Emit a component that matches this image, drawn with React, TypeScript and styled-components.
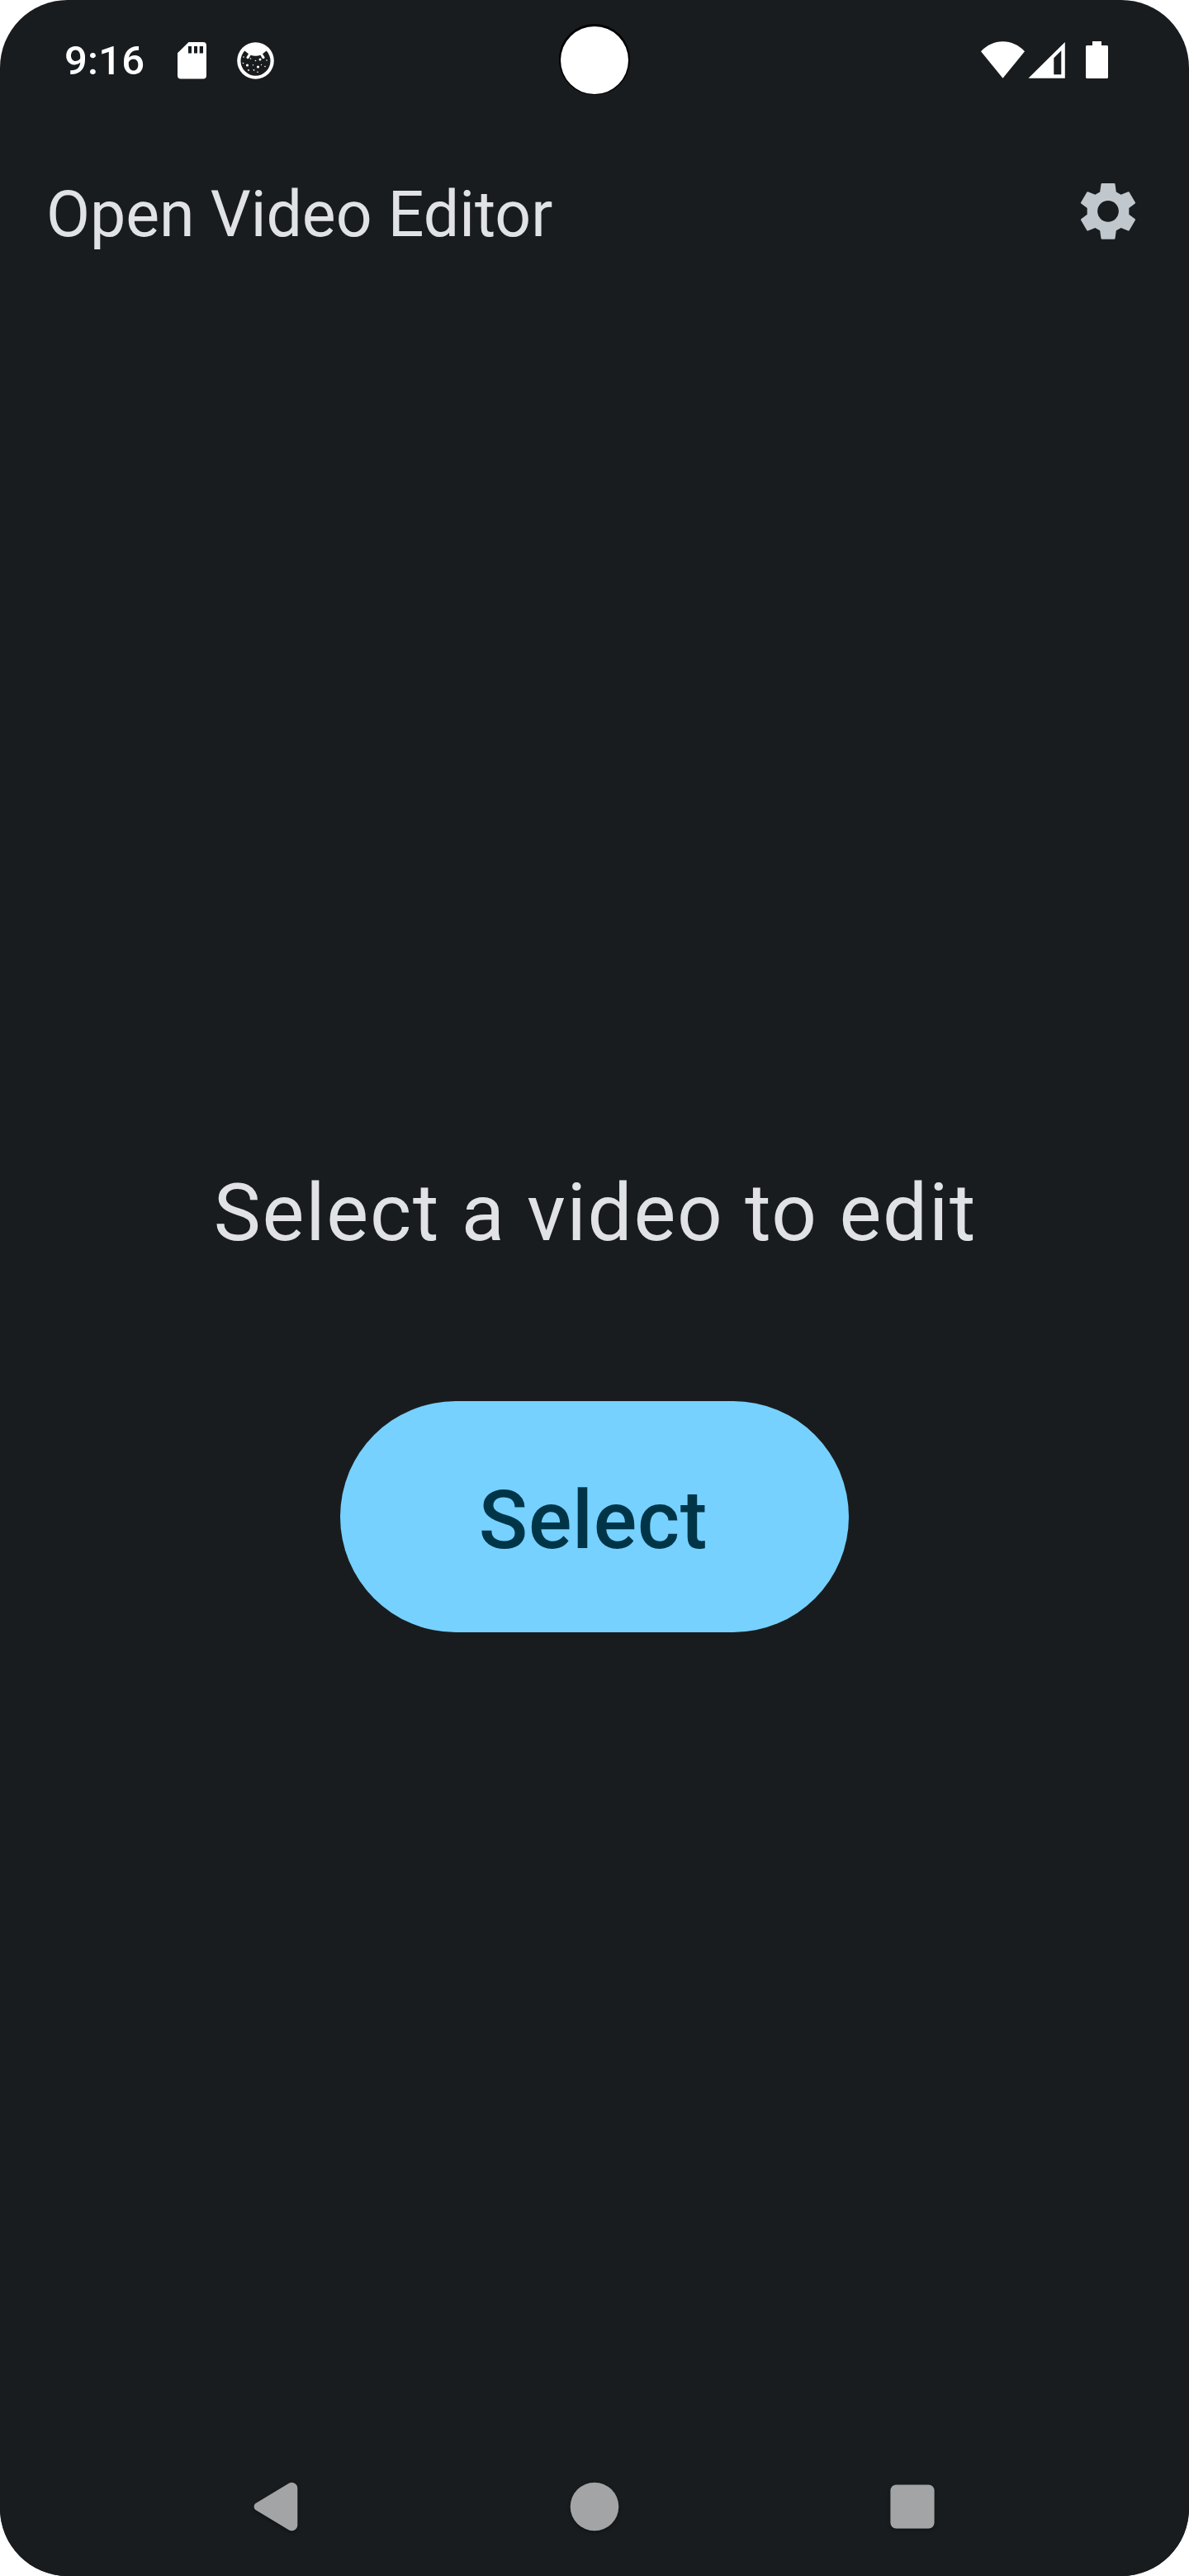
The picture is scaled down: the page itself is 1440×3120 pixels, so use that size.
import React from "react";
import styled, { createGlobalStyle } from "styled-components";

const GlobalStyle = createGlobalStyle`
  body {
    margin: 0;
    background: #ffffff;
  }
  * {
    box-sizing: border-box;
  }
`;

const Screen = styled.div`
  display: flex;
  flex-direction: column;
  width: 1440px;
  height: 3120px;
  overflow: hidden;
  border-radius: 82px;
  background: #191c1e;
  color: #e1e2e5;
  font-family: Roboto, "Liberation Sans", sans-serif;
`;

const StatusBar = styled.header`
  display: grid;
  grid-template-columns: 1fr 86px 1fr;
  align-items: center;
  height: 147px;
  padding: 0 98px 0 78px;
`;

const StatusGroup = styled.div<{ $end?: boolean }>`
  display: flex;
  align-items: center;
  justify-content: ${(p) => (p.$end ? "flex-end" : "flex-start")};
  padding-bottom: ${(p) => (p.$end ? 3 : 0)}px;
`;

const Clock = styled.time`
  width: 137px;
  padding-top: 1px;
  color: #ffffff;
  font-size: 49px;
  font-weight: 500;
  line-height: 58px;
  letter-spacing: 0.2px;
`;

const Glyph = styled.svg<{ $w: number; $h: number; $gap?: number }>`
  display: block;
  flex: none;
  width: ${(p) => p.$w}px;
  height: ${(p) => p.$h}px;
  margin-left: ${(p) => p.$gap ?? 0}px;
`;

const Camera = styled.div`
  width: 86px;
  height: 86px;
  padding: 3px 2px 1px;
  margin: -3px 0 0 10px;
  border-radius: 50%;
  background: #000000;

  &::before {
    content: "";
    display: block;
    width: 82px;
    height: 82px;
    border-radius: 50%;
    background: #ffffff;
  }
`;

const AppBar = styled.div`
  display: flex;
  align-items: center;
  justify-content: space-between;
  height: 224px;
  padding: 0 65px 6px 56px;
`;

const Title = styled.h1`
  margin: 0;
  padding-top: 8px;
  font-size: 77px;
  font-weight: 400;
  line-height: 98px;
`;

const IconButton = styled.button`
  display: flex;
  padding: 0;
  border: 0;
  background: none;
`;

const Main = styled.main`
  display: flex;
  flex: 1;
  flex-direction: column;
  align-items: center;
  padding-top: 1035px;
`;

const Prompt = styled.p`
  margin: 0;
  padding-left: 2px;
  font-size: 96px;
  line-height: 126px;
  letter-spacing: 1.75px;
`;

const SelectButton = styled.button`
  width: 616px;
  height: 280px;
  margin-top: 165px;
  padding: 9px 3px 0 0;
  border: 0;
  border-radius: 140px;
  background: #76d1ff;
  color: #003548;
  font-family: inherit;
  font-size: 98px;
  font-weight: 500;
  line-height: 126px;
  letter-spacing: 0.7px;
`;

const NavBar = styled.nav`
  display: flex;
  align-items: center;
  justify-content: space-between;
  height: 168px;
  padding: 0 302px;
  background: #181c1e;
`;

const NavIcon = styled.svg`
  display: block;
  width: 66px;
  height: 66px;
  fill: #a3a4a5;
  filter: drop-shadow(0 2px 2px rgba(0, 0, 0, 0.3));
`;

const SdCard = () => (
  <Glyph $w={35} $h={45} viewBox="0 0 35 45" fill="#fff">
    <path
      fillRule="evenodd"
      d="M13.500 0H31a4 4 0 0 1 4 4v36.500a4 4 0 0 1-4 4H4a4 4 0 0 1-4-4V13.300zM13 5v8.500h4V5zm7 0v8.500h4V5zm6.700 0v8.500H31V5z"
    />
  </Glyph>
);

const SPECKS: [number, number, number][] = [
  [8, 18, 0.8], [16.5, 20, 0.8], [22.5, 22.5, 0.8], [28, 21, 1.5], [36, 22, 0.8],
  [7.5, 25.5, 0.8], [12.5, 28, 1.6], [19.5, 27.7, 0.7], [25.5, 30, 1.6],
  [29.5, 27.5, 0.7], [34, 29.5, 0.8], [14, 34, 0.9], [20.5, 33.8, 0.9], [25, 36.3, 0.8],
];

const CatBadge = () => (
  <Glyph $w={45} $h={45} $gap={37} viewBox="0 0 45 45">
    <circle cx="22.5" cy="22.5" r="22.3" fill="#fff" />
    <path
      fill="#191c1e"
      d="M9.300 10.500L14 14.300L11.300 18.500Q12.300 21.500 14.500 19.500L16.500 15.800Q22.500 17.700 28.500 15.800L30.500 19.500Q33 21.500 33.700 18.500L31 14.300L35.700 10.500A18 18 0 1 1 9.300 10.500Z"
    />
    {SPECKS.map(([x, y, r]) => (
      <circle key={`${x}-${y}`} cx={x} cy={y} r={r} fill="#fff" />
    ))}
  </Glyph>
);

const Wifi = () => (
  <Glyph $w={53} $h={45} viewBox="0 0 53 45" fill="#fff">
    <path d="M0 12.300C7 4.500 16.500 0.200 26.500 0.200S46 4.500 53 12.300L26.500 44.700Z" />
  </Glyph>
);

const Signal = () => (
  <Glyph $w={45} $h={45} $gap={4} viewBox="0 0 45 45" fill="#fff">
    <path fillRule="evenodd" d="M44.800 1V44.800H0.500ZM40.300 11.300L31.300 20.300V40.300H40.300Z" />
  </Glyph>
);

const Battery = () => (
  <Glyph $w={27} $h={45} $gap={25} viewBox="0 0 27 45" fill="#fff">
    <path d="M8 0H19V5H26L27 6V44L26 45H1L0 44V6L1 5H8Z" />
  </Glyph>
);

const Gear = () => (
  <Glyph $w={66} $h={68} viewBox="87 66.5 198 204" fill="#c0c7cd">
    <path
      fillRule="evenodd"
      d="M164 66.500H208Q211 66.500 211.500 69.500L215.500 98L233 108L259 97.500Q261.500 96.500 263 99L284.500 135.500Q286 138 284 140L262 156.500V179.500L284 196.500Q286 198 284.500 200.500L263 237.500Q261.500 240 259 239L233 228.500L215.500 238L211.500 267Q211 270 208 270H164Q161 270 160.500 267L156.500 238L139 228.500L113 239Q110.500 240 109 237.500L87.500 200.500Q86 198 88 196.500L110 179.500V156.500L88 140Q86 138 87.500 135.500L109 99Q110.500 96.500 113 97.500L139 108L156.500 98L160.500 69.500Q161 66.500 164 66.500ZM186 129.500A38.500 38.500 0 1 0 186 206.500A38.500 38.500 0 1 0 186 129.500Z"
    />
  </Glyph>
);

export default function App() {
  return (
    <>
      <GlobalStyle />
      <Screen>
        <StatusBar>
          <StatusGroup>
            <Clock>9:16</Clock>
            <SdCard />
            <CatBadge />
          </StatusGroup>
          <Camera />
          <StatusGroup $end>
            <Wifi />
            <Signal />
            <Battery />
          </StatusGroup>
        </StatusBar>
        <AppBar>
          <Title>Open Video Editor</Title>
          <IconButton aria-label="Settings">
            <Gear />
          </IconButton>
        </AppBar>
        <Main>
          <Prompt>Select a video to edit</Prompt>
          <SelectButton>Select</SelectButton>
        </Main>
        <NavBar>
          <NavIcon viewBox="0 0 66 66">
            <path d="M8 28.800L47.800 4.800A7 7 0 0 1 58.300 11V55A7 7 0 0 1 47.800 61.200L8 37.200A4.900 4.900 0 0 1 8 28.800Z" />
          </NavIcon>
          <NavIcon viewBox="0 0 66 66">
            <circle cx="33" cy="33" r="29.3" />
          </NavIcon>
          <NavIcon viewBox="0 0 66 66">
            <rect x="6.4" y="6.4" width="53.2" height="53.2" rx="7" />
          </NavIcon>
        </NavBar>
      </Screen>
    </>
  );
}
